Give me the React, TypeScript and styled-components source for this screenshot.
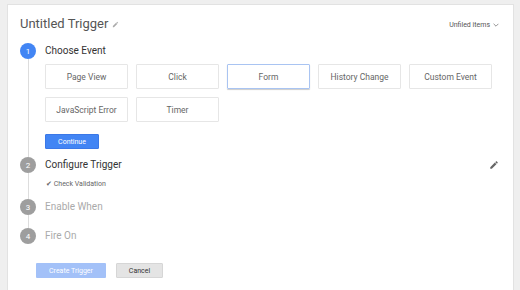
import styled, { createGlobalStyle } from 'styled-components';

const GlobalStyle = createGlobalStyle`
    body {
        margin: 0;
        background: #efefef;
        font-family: Roboto, "Liberation Sans", sans-serif;
        overflow: hidden;
    }
`;

type StepState = 'active' | 'done' | 'pending';

const events = ['Page View', 'Click', 'Form', 'History Change', 'Custom Event', 'JavaScript Error', 'Timer'];

const PencilIcon = ({ size, color }: { size: number, color: string }) => (
    <svg width={size} height={size} viewBox="0 0 24 24">
        <path fill={color} d="M3 17.25V21h3.75L17.81 9.94l-3.75-3.75L3 17.25zM20.71 7.04a1 1 0 0 0 0-1.41l-2.34-2.34a1 1 0 0 0-1.41 0l-1.83 1.83 3.75 3.75 1.83-1.83z"/>
    </svg>
);

const ChevronIcon = () => (
    <svg width="6" height="4" viewBox="0 0 10 6">
        <path d="M1 1l4 4 4-4" fill="none" stroke="#777" strokeWidth="1.3"/>
    </svg>
);

const App = () => {
    const selected = 'Form';

    return (
        <>
            <GlobalStyle />
            <StyledPage>
                <StyledCard>
                    <StyledHeader>
                        <StyledTitle>
                            Untitled Trigger
                            <PencilIcon size={7} color="#aaa" />
                        </StyledTitle>
                        <StyledFolder>
                            Unfiled items <ChevronIcon />
                        </StyledFolder>
                    </StyledHeader>

                    <StyledStep $pad={8}>
                        <StyledRail>
                            <StyledCircle $state="active">1</StyledCircle>
                            <StyledLine />
                        </StyledRail>
                        <StyledBody>
                            <StyledStepTitle $state="active">Choose Event</StyledStepTitle>
                            <StyledEventGrid>
                                {events.map((e) => (
                                    <StyledEventButton key={e} $selected={e === selected}>{e}</StyledEventButton>
                                ))}
                            </StyledEventGrid>
                            <StyledContinue>Continue</StyledContinue>
                        </StyledBody>
                    </StyledStep>

                    <StyledStep $pad={11}>
                        <StyledRail>
                            <StyledCircle $state="done">2</StyledCircle>
                            <StyledLine />
                        </StyledRail>
                        <StyledBody>
                            <StyledStepRow>
                                <StyledStepTitle $state="done">Configure Trigger</StyledStepTitle>
                                <PencilIcon size={10} color="#666" />
                            </StyledStepRow>
                            <StyledCheck>✔ Check Validation</StyledCheck>
                        </StyledBody>
                    </StyledStep>

                    <StyledStep $pad={13}>
                        <StyledRail>
                            <StyledCircle $state="pending">3</StyledCircle>
                            <StyledLine />
                        </StyledRail>
                        <StyledBody>
                            <StyledStepTitle $state="pending">Enable When</StyledStepTitle>
                        </StyledBody>
                    </StyledStep>

                    <StyledStep $pad={0}>
                        <StyledRail>
                            <StyledCircle $state="pending">4</StyledCircle>
                        </StyledRail>
                        <StyledBody>
                            <StyledStepTitle $state="pending">Fire On</StyledStepTitle>
                        </StyledBody>
                    </StyledStep>

                    <StyledFooter>
                        <StyledCreate>Create Trigger</StyledCreate>
                        <StyledCancel>Cancel</StyledCancel>
                    </StyledFooter>
                </StyledCard>
            </StyledPage>
        </>
    );
}

export default App;

const StyledPage = styled.div`
    padding: 4px 6px 0 7px;
    height: 290px;
    box-sizing: border-box;
`;

const StyledCard = styled.div`
    background: #fff;
    border: 1px solid #e2e2e2;
    border-bottom: none;
    height: 100%;
    box-sizing: border-box;
    padding: 0 14px 0 12px;
`;

const StyledHeader = styled.div`
    display: flex;
    justify-content: space-between;
    align-items: flex-start;
    height: 38px;
    padding-top: 11px;
    box-sizing: border-box;
`;

const StyledTitle = styled.div`
    display: flex;
    align-items: center;
    gap: 4px;
    font-size: 13px;
    color: #555;
    line-height: 16px;
`;

const StyledFolder = styled.div`
    display: flex;
    align-items: center;
    gap: 3px;
    font-size: 7px;
    color: #555;
    margin-top: 5px;
`;

const StyledStep = styled.div<{ $pad: number }>`
    display: flex;
    gap: 9px;

    & > div:last-child {
        padding-bottom: ${(p) => p.$pad}px;
    }
`;

const StyledRail = styled.div`
    display: flex;
    flex-direction: column;
    align-items: center;
    width: 16px;
    flex-shrink: 0;
`;

const StyledCircle = styled.div<{ $state: StepState }>`
    width: 16px;
    height: 16px;
    border-radius: 50%;
    background: ${(p) => (p.$state === 'active' ? '#4285f4' : '#9e9e9e')};
    color: #fff;
    font-size: 8px;
    display: flex;
    align-items: center;
    justify-content: center;
`;

const StyledLine = styled.div`
    flex: 1;
    width: 1px;
    background: #ddd;
`;

const StyledBody = styled.div`
    flex: 1;
    display: flex;
    flex-direction: column;
    align-items: flex-start;
`;

const StyledStepRow = styled.div`
    display: flex;
    justify-content: space-between;
    align-items: center;
    align-self: stretch;
`;

const StyledStepTitle = styled.div<{ $state: StepState }>`
    height: 16px;
    line-height: 16px;
    font-size: 10px;
    color: ${(p) => (p.$state === 'pending' ? '#aaa' : '#333')};
`;

const StyledEventGrid = styled.div`
    display: grid;
    grid-template-columns: repeat(5, 83px);
    gap: 8px;
    margin-top: 5px;
`;

const StyledEventButton = styled.div<{ $selected: boolean }>`
    height: 25px;
    box-sizing: border-box;
    border: 1px solid ${(p) => (p.$selected ? '#a9c4f2' : '#e6e6e6')};
    box-shadow: ${(p) => (p.$selected ? '0 1px 1px rgba(0,0,0,0.2)' : 'none')};
    border-radius: 1px;
    display: flex;
    align-items: center;
    justify-content: center;
    font-size: 8.5px;
    color: #666;
`;

const StyledContinue = styled.div`
    margin-top: 12px;
    width: 54px;
    height: 15px;
    background: #4285f4;
    border: 1px solid #3b78e7;
    box-sizing: border-box;
    border-radius: 1px;
    color: #fff;
    font-size: 7px;
    display: flex;
    align-items: center;
    justify-content: center;
`;

const StyledCheck = styled.div`
    margin-top: 7px;
    margin-left: 1px;
    font-size: 7px;
    color: #666;
`;

const StyledFooter = styled.div`
    display: flex;
    gap: 10px;
    margin-top: 19px;
    padding-left: 16px;
`;

const StyledCreate = styled.div`
    width: 70px;
    height: 15px;
    background: #a3c1f8;
    border-radius: 1px;
    color: #fff;
    font-size: 7px;
    display: flex;
    align-items: center;
    justify-content: center;
`;

const StyledCancel = styled.div`
    width: 47px;
    height: 15px;
    box-sizing: border-box;
    background: #e4e4e4;
    border: 1px solid #d6d6d6;
    border-radius: 1px;
    color: #333;
    font-size: 7px;
    display: flex;
    align-items: center;
    justify-content: center;
`;
